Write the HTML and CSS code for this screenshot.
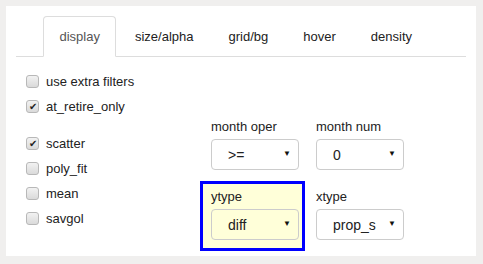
FILE: index.html
```html
<!DOCTYPE html>
<html lang="en">
<head>
  <meta charset="UTF-8" />
  <title>Plot options</title>
  <link rel="stylesheet" href="styles.css">
</head>
<body>
  <div class="panel">
    <ul class="tabs">
      <li class="active"><a>display</a></li>
      <li><a>size/alpha</a></li>
      <li><a>grid/bg</a></li>
      <li><a>hover</a></li>
      <li><a>density</a></li>
    </ul>

    <div class="tab-body">
      <div class="checks">
        <label class="check"><input type="checkbox" /> use extra filters</label>
        <label class="check"><input type="checkbox" checked /> at_retire_only</label>
        <label class="check spaced"><input type="checkbox" checked /> scatter</label>
        <label class="check"><input type="checkbox" /> poly_fit</label>
        <label class="check"><input type="checkbox" /> mean</label>
        <label class="check"><input type="checkbox" /> savgol</label>
      </div>

      <div class="fields">
        <div class="field">
          <div class="field-label">month oper</div>
          <div class="sel"><select><option>&gt;=</option></select></div>
        </div>
        <div class="field">
          <div class="field-label">month num</div>
          <div class="sel"><select><option>0</option></select></div>
        </div>
        <div class="field highlight">
          <div class="field-label">ytype</div>
          <div class="sel"><select><option>diff</option></select></div>
        </div>
        <div class="field">
          <div class="field-label">xtype</div>
          <div class="sel"><select><option>prop_s</option></select></div>
        </div>
      </div>
    </div>
  </div>
</body>
</html>
```

FILE: styles.css
```css
body {
  margin: 0;
  background: #f0efee;
  font-family: "Liberation Sans", Arial, sans-serif;
  font-size: 13px;
  color: #222;
}
.panel {
  margin: 6px;
  width: 470px;
  height: 250px;
  padding: 10px;
  box-sizing: border-box;
  background: #fff;
}
.tabs {
  display: flex;
  list-style: none;
  margin: 0;
  padding: 0 0 0 27px;
  border-bottom: 1px solid #ddd;
}
.tabs li {
  margin: 0 2px -1px 0;
}
.tabs a {
  display: block;
  padding: 10px 15.5px;
  line-height: 19px;
  border: 1px solid transparent;
  border-radius: 4px 4px 0 0;
  color: #222;
}
.tabs li.active a {
  color: #555;
  background: #fff;
  border-color: #ddd #ddd transparent;
}
.tab-body {
  display: flex;
}
.checks {
  width: 184px;
  padding: 12px 0 0 10px;
  box-sizing: border-box;
}
.check {
  display: flex;
  align-items: center;
  height: 25px;
  color: #222;
}
.check.spaced {
  margin-top: 12px;
}
.check input {
  appearance: none;
  -webkit-appearance: none;
  width: 13px;
  height: 13px;
  margin: 0 7px 0 0;
  border: 1px solid #b8b8b8;
  border-radius: 3px;
  background: linear-gradient(#f2f2f2, #dadada);
  display: grid;
  place-items: center;
  box-sizing: border-box;
}
.check input:checked::after {
  content: "\2714";
  font-size: 10px;
  line-height: 10px;
  color: #222;
}
.fields {
  display: grid;
  grid-template-columns: 105px 105px;
  margin-top: 54px;
  align-self: flex-start;
}
.field {
  border: 3px solid transparent;
  padding: 5px 3px 8px 8px;
}
.field.highlight {
  border-color: #0000ff;
  background: #ffffd9;
}
.field-label {
  line-height: 15px;
  margin-bottom: 5px;
}
.sel {
  position: relative;
  width: 88px;
  height: 31px;
  border: 1px solid #ccc;
  border-radius: 4px;
  box-sizing: border-box;
}
.sel select {
  appearance: none;
  -webkit-appearance: none;
  width: 100%;
  height: 100%;
  border: none;
  background: transparent;
  padding: 0 0 0 16px;
  font-family: "Liberation Sans", Arial, sans-serif;
  font-size: 14px;
  color: #222;
  outline: none;
}
.sel::after {
  content: "\25BC";
  position: absolute;
  right: 7px;
  top: 9px;
  font-size: 8px;
  color: #111;
  pointer-events: none;
}
```
